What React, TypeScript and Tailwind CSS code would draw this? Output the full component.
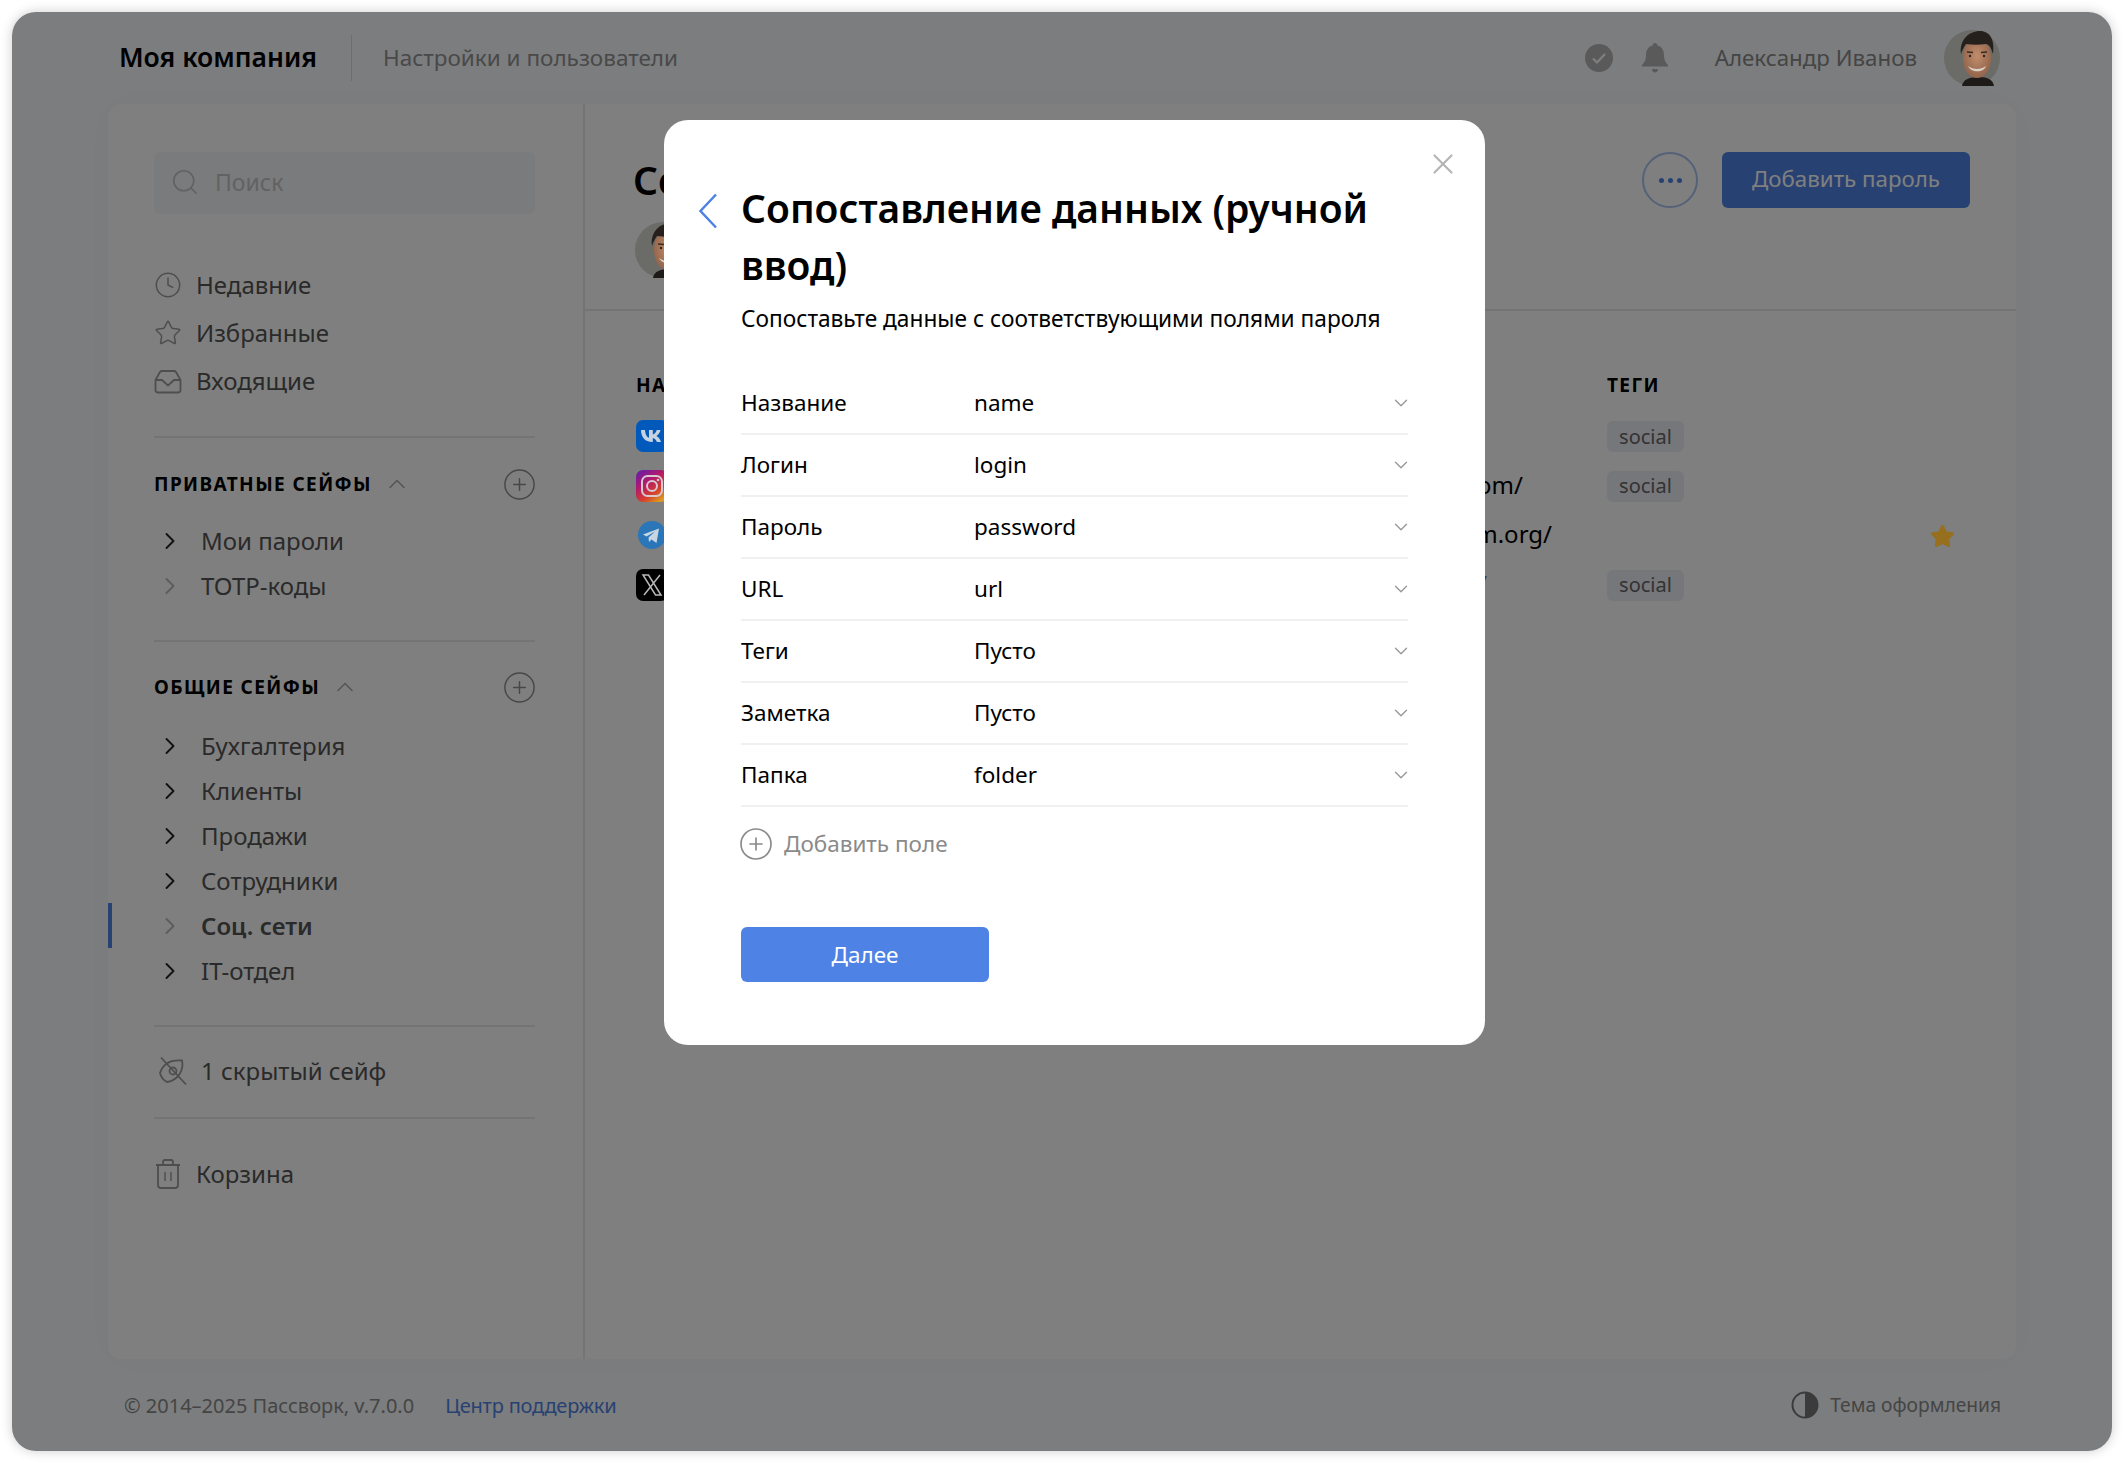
import React from "react";
import { ChevronDown, ChevronRight, ChevronUp, CirclePlus, Clock, Search, Star, X } from "lucide-react";

const TopItem = ({ icon, label }: { icon: React.ReactNode; label: string }) => (
  <div className="flex h-[48px] items-center gap-[14px] text-[#555]">
    <span className="flex w-[28px] justify-center text-[#9c9c9c]">{icon}</span>
    <span>{label}</span>
  </div>
);

const SafeItem = ({ label, active, dim }: { label: string; active?: boolean; dim?: boolean }) => (
  <div className={active ? "relative flex h-[45px] items-center font-semibold text-[#555]" : "relative flex h-[45px] items-center text-[#555]"}>
    {active && <span className="absolute -left-[46px] top-0 h-full w-[4px] bg-[#4e82e4]" />}
    <ChevronRight size={28} strokeWidth={1.6} className={dim ? "ml-[2px] mr-[17px] text-[#b8b8b8]" : "ml-[2px] mr-[17px] text-[#222]"} />
    <span>{label}</span>
  </div>
);

const SectionHead = ({ title }: { title: string }) => (
  <div className="flex h-[30px] items-center">
    <span className="text-[19px] font-bold uppercase tracking-[1.4px] text-black">{title}</span>
    <ChevronUp size={28} strokeWidth={1.3} className="ml-[11px] text-[#aaa]" />
    <CirclePlus size={35} strokeWidth={1} className="ml-auto -mr-[2px] text-[#8f8f8f]" />
  </div>
);

const Avatar = ({ className }: { className: string }) => (
  <svg viewBox="0 0 56 56" className={className}>
    <defs>
      <radialGradient id="skin" cx="0.5" cy="0.45" r="0.6">
        <stop offset="0" stopColor="#c08c6c" />
        <stop offset="1" stopColor="#8f6148" />
      </radialGradient>
    </defs>
    <circle cx="28" cy="28" r="28" fill="#6b6b68" />
    <path d="M18 56c1-7 8-9 17-9s14 3 15 9z" fill="#1d1a18" />
    <ellipse cx="33" cy="28" rx="14" ry="20" fill="url(#skin)" />
    <path d="M17 24C15 10 25 1 36 1c10 0 15 9 13 23-2-6-3-9-7-10-7 1-13 1-20 0-2 3-4 6-5 10z" fill="#26201c" />
    <path d="M24 36c5 4 13 4 18 0-2 7-15 7-18 0z" fill="#d8d2c8" />
    <path d="M23 22l6 .5M37 22.500l6-.5" stroke="#3a2a20" strokeWidth="1.500" />
    <circle cx="26" cy="26" r="1.200" fill="#2b2522" />
    <circle cx="40" cy="26" r="1.200" fill="#2b2522" />
  </svg>
);

const services = [
  { name: "VK", url: "", tag: true, pad: "pr-0" },
  { name: "Instagram", url: "https://instagram.com/", tag: true, pad: "pr-[84px]" },
  { name: "Telegram", url: "https://web.telegram.org/", pad: "pr-[55px]", star: true },
  { name: "X", url: "https://twitter.com/", link: true, tag: true, pad: "pr-[120px]" },
];

const ServiceIcon = ({ name }: { name: string }) => {
  if (name === "VK") {
    return (
      <svg viewBox="0 0 32 32" className="relative z-10 h-[32px] w-[32px] shrink-0">
        <rect width="32" height="32" rx="7" fill="#0059bb" />
        <path d="M5 10h4c.3 5 2.300 7.300 4 7.800V10h3.800v4.400c1.700-.2 3.400-2.200 4-4.400h3.700c-.6 2.900-2.600 5-4.100 5.900 1.500.8 3.700 2.500 4.600 6h-4.100c-.7-2.200-2.400-3.800-4.100-4v4h-.5C9 21.900 5.200 17.600 5 10z" fill="#c8d2e0" />
      </svg>
    );
  }
  if (name === "Instagram") {
    return (
      <svg viewBox="0 0 32 32" className="relative z-10 h-[32px] w-[32px] shrink-0">
        <defs>
          <linearGradient id="ig" x1="0" y1="0" x2="0.7" y2="1">
            <stop offset="0" stopColor="#5a1fb0" />
            <stop offset="0.4" stopColor="#b0186f" />
            <stop offset="0.75" stopColor="#d8402a" />
            <stop offset="1" stopColor="#dc9a20" />
          </linearGradient>
        </defs>
        <rect width="32" height="32" rx="7" fill="url(#ig)" />
        <rect x="6" y="6" width="20" height="20" rx="5.500" fill="none" stroke="#d8c8d0" strokeWidth="2" />
        <circle cx="16" cy="16" r="5" fill="none" stroke="#d8c8d0" strokeWidth="2" />
        <circle cx="22" cy="10" r="1.300" fill="#d8c8d0" />
      </svg>
    );
  }
  if (name === "Telegram") {
    return (
      <svg viewBox="0 0 32 32" className="relative z-10 h-[32px] w-[32px] shrink-0">
        <circle cx="16" cy="16" r="14" fill="#2a76b8" />
        <path d="M7 15.500 23 9.500 20.500 24 15.500 20.500 13 23 12.500 18.500 19 12.500 10.500 17.500z" fill="#c8d6e4" />
      </svg>
    );
  }
  return (
    <svg viewBox="0 0 32 32" className="relative z-10 h-[32px] w-[32px] shrink-0">
      <rect width="32" height="32" rx="7" fill="#000" />
      <path d="M7 6h5.500L25 26h-5.500zM24 6 8 26" fill="none" stroke="#b8b8b8" strokeWidth="1.500" />
    </svg>
  );
};

const fields = [
  ["Название", "name"],
  ["Логин", "login"],
  ["Пароль", "password"],
  ["URL", "url"],
  ["Теги", "Пусто"],
  ["Заметка", "Пусто"],
  ["Папка", "folder"],
];

export default function App() {
  return (
    <div className="h-[1463px] w-[2124px] overflow-hidden bg-white p-[12px] font-['Noto_Sans',sans-serif] text-[24px] text-black">
      <div className="relative flex h-[1439px] w-[2100px] flex-col rounded-[24px] bg-[#f9fbfd] shadow-[0_0_12px_rgba(0,0,0,0.2)]">
        {/* шапка */}
        <header className="flex h-[92px] items-center pl-[107px] pr-[112px] text-[22.5px]">
          <span className="text-[26.500px] font-semibold">Моя компания</span>
          <span className="ml-[34px] mr-[31px] h-[46px] w-px bg-[#ddd]" />
          <span className="text-[#929292]">Настройки и пользователи</span>
          <svg viewBox="0 0 28 28" className="ml-auto h-[28px] w-[28px]">
            <circle cx="14" cy="14" r="14" fill="#b4b4b4" />
            <path d="M8 14.500l4 4 8-8.500" fill="none" stroke="#fff" strokeWidth="2.200" />
          </svg>
          <svg viewBox="0 0 28 32" className="ml-[28px] h-[32px] w-[28px]">
            <path d="M14 1c1.500 0 2.300 1 2.400 2.400C21 4.500 23 8.500 23 13c0 5 1.500 7.500 4 10v1.500H1V23c2.500-2.500 4-5 4-10 0-4.500 2-8.500 6.600-9.600C11.700 2 12.500 1 14 1z" fill="#b4b4b4" />
            <path d="M11 27h6c0 2-1.200 3.500-3 3.500S11 29 11 27z" fill="#b4b4b4" />
          </svg>
          <span className="ml-[46px] text-[22.3px] text-[#8a8a8a]">Александр Иванов</span>
          <Avatar className="relative z-10 ml-[27px] h-[56px] w-[56px]" />
        </header>

        {/* панель */}
        <div className="mx-[96px] flex h-[1255px] rounded-[14px] bg-white shadow-[0_0_40px_rgba(0,0,0,0.03)]">
          <aside className="w-[477px] shrink-0 border-r-2 border-[#e8e8e8] pl-[46px] pr-[48px] pt-[48px]">
            <div className="flex h-[62px] items-center rounded-[6px] bg-[#f5f7fa] pb-[2px] pl-[16px] text-[23px] text-[#c4c4c4]">
              <Search size={30} strokeWidth={1.3} />
              <span className="ml-[15px]">Поиск</span>
            </div>
            <div className="mt-[47px]">
              <TopItem icon={<Clock size={32} strokeWidth={1.3} />} label="Недавние" />
              <TopItem icon={<Star size={32} strokeWidth={1.3} />} label="Избранные" />
              <TopItem
                icon={
                  <svg viewBox="0 0 28 28" className="h-[28px] w-[28px]" fill="none" stroke="currentColor" strokeWidth="1.800">
                    <path d="M1.500 13 6 5q.6-1 2-1h12q1.400 0 2 1l4.500 8v10q0 2.500-2.500 2.500H4q-2.500 0-2.500-2.500z" />
                    <path d="M1.500 13H8l6 5.500 6-5.500h6.500" />
                  </svg>
                }
                label="Входящие"
              />
            </div>
            <div className="mt-[31px] h-[2px] bg-[#e8e8e8]" />

            <div className="mt-[31px]">
              <SectionHead title="Приватные сейфы" />
            </div>
            <div className="mt-[19px]">
              <SafeItem label="Мои пароли" />
              <SafeItem label="TOTP-коды" dim />
            </div>
            <div className="mt-[32px] h-[2px] bg-[#e8e8e8]" />

            <div className="mt-[30px]">
              <SectionHead title="Общие сейфы" />
            </div>
            <div className="mt-[21px]">
              <SafeItem label="Бухгалтерия" />
              <SafeItem label="Клиенты" />
              <SafeItem label="Продажи" />
              <SafeItem label="Сотрудники" />
              <SafeItem label="Соц. сети" active dim />
              <SafeItem label="IT-отдел" />
            </div>
            <div className="mt-[32px] h-[2px] bg-[#e8e8e8]" />

            <div className="mt-[21px] flex h-[46px] items-center text-[#555]">
              <svg viewBox="0 0 30 30" className="ml-[4px] mr-[13px] h-[30px] w-[30px] text-[#9c9c9c]" fill="none" stroke="currentColor" strokeWidth="1.800">
                <path d="M3 1.500 28 28.500" />
                <path d="M2 17C5 8 13 3.500 24 4.500 26 13 21 24 9 26 5 24 3 21 2 17z" />
                <circle cx="15" cy="15" r="3.500" />
              </svg>
              <span>1 скрытый сейф</span>
            </div>
            <div className="mt-[23px] h-[2px] bg-[#e8e8e8]" />

            <div className="mt-[32px] flex h-[46px] items-center gap-[14px] text-[#555]">
              <svg viewBox="0 0 28 30" className="h-[30px] w-[28px] text-[#9c9c9c]" fill="none" stroke="currentColor" strokeWidth="1.800">
                <path d="M2 6h24M9 6V3q0-2 2-2h6q2 0 2 2v3" />
                <path d="M4 6v20q0 3 3 3h14q3 0 3-3V6" />
                <path d="M11 13v9M17 13v9" strokeWidth="1.400" />
              </svg>
              <span>Корзина</span>
            </div>
          </aside>

          <main className="min-w-0 flex-1">
            <div className="flex h-[207px] items-start border-b-2 border-[#e8e8e8] pl-[48px] pr-[46px] pt-[48px]">
              <div>
                <div className="w-[31px] overflow-hidden whitespace-nowrap text-[39px] font-semibold leading-[56px]">Со</div>
                <Avatar className="relative z-10 mt-[14px] ml-[2px] h-[56px] w-[56px]" />
              </div>
              <span className="ml-auto flex h-[56px] w-[56px] items-center justify-center gap-[4px] rounded-full border-2 border-[#a9c3f2]">
                <i className="h-[5px] w-[5px] rounded-full bg-[#4e82e4]" />
                <i className="h-[5px] w-[5px] rounded-full bg-[#4e82e4]" />
                <i className="h-[5px] w-[5px] rounded-full bg-[#4e82e4]" />
              </span>
              <span className="ml-[24px] flex h-[56px] w-[248px] items-center justify-center rounded-[6px] bg-[#4e82e4] pb-[2px] text-[22.3px] text-white">Добавить пароль</span>
            </div>

            <div className="pl-[51px] pt-[59px]">
              <div className="flex h-[30px] items-center text-[19px] font-bold uppercase tracking-[1.4px]">
                <span className="w-[971px]">
                  <span className="block w-[28px] overflow-hidden">На</span>
                </span>
                <span>Теги</span>
              </div>
              <div className="mt-[10px]">
                {services.map((s) => (
                  <div key={s.name} className="flex h-[49.500px] items-center">
                    <span className="mt-[3px] flex w-[849px] shrink-0 items-center">
                      <ServiceIcon name={s.name} />
                    </span>
                    <span className={`w-[122px] shrink-0 overflow-hidden pt-[1px] ${s.pad} ${s.link ? "text-[#4e82e4]" : ""}`}>
                      <span className="flex justify-end whitespace-nowrap">{s.url}</span>
                    </span>
                    <span className="w-[324px] shrink-0">
                      {s.tag && <span className="inline-flex h-[31px] w-[77px] items-center justify-center rounded-[6px] bg-[#eceff5] text-[20px] text-[#666]">social</span>}
                    </span>
                    {s.star && <Star size={25} fill="#96701e" stroke="#96701e" className="relative z-10 -ml-[1px] mt-[6px]" />}
                  </div>
                ))}
              </div>
            </div>
          </main>
        </div>

        {/* подвал */}
        <footer className="flex flex-1 items-center pl-[112px] pr-[111px] text-[20px] text-[#8a8a8a]">
          <span className="pt-[2px]">© 2014–2025 Пассворк, v.7.0.0</span>
          <span className="ml-[31px] pt-[2px] tracking-[-0.2px] text-[#4e82e4]">Центр поддержки</span>
          <svg viewBox="0 0 28 28" className="ml-auto mr-[11px] h-[28px] w-[28px] text-[#777]">
            <circle cx="14" cy="14" r="12.500" fill="none" stroke="currentColor" strokeWidth="2" />
            <path d="M14 1.500a12.500 12.500 0 0 1 0 25z" fill="currentColor" />
          </svg>
          <span className="text-[19.200px]">Тема оформления</span>
        </footer>

        {/* затемнение и окно */}
        <div className="absolute inset-0 rounded-[24px] bg-black/50">
          <div className="absolute left-[652px] top-[108px] z-20 h-[925px] w-[821px] rounded-[24px] bg-white pl-[77px] pr-[77px] pt-[59px] text-[22.5px]">
            <X size={34} strokeWidth={1.5} className="absolute right-[25px] top-[27px] text-[#b4b4b4]" />
            <svg viewBox="0 0 20 36" className="absolute left-[34px] top-[73px] h-[36px] w-[20px] text-[#4e82e4]" fill="none" stroke="currentColor" strokeWidth="2.500">
              <path d="M18 1.500 2.500 18 18 34.500" />
            </svg>
            <h1 className="text-[39px] font-semibold leading-[57px]">Сопоставление данных (ручной ввод)</h1>
            <p className="mt-[9px] text-[22.7px] leading-[34px]">Сопоставьте данные с соответствующими полями пароля</p>
            <div className="mt-[37px]">
              {fields.map(([label, value]) => (
                <div key={label} className="flex h-[62px] items-center border-b-2 border-[#f0f0f0]">
                  <span className="w-[233px]">{label}</span>
                  <span>{value}</span>
                  <ChevronDown size={22} strokeWidth={1.5} className="ml-auto -mr-[4px] text-[#999]" />
                </div>
              ))}
            </div>
            <div className="mt-[19px] flex items-center gap-[10px] text-[#8a8a8a]">
              <CirclePlus size={36} strokeWidth={1.1} className="-ml-[3px]" />
              Добавить поле
            </div>
            <div className="mt-[65px] flex h-[55px] w-[248px] items-center justify-center rounded-[6px] bg-[#4e82e4] text-white">Далее</div>
          </div>
        </div>
      </div>
    </div>
  );
}
